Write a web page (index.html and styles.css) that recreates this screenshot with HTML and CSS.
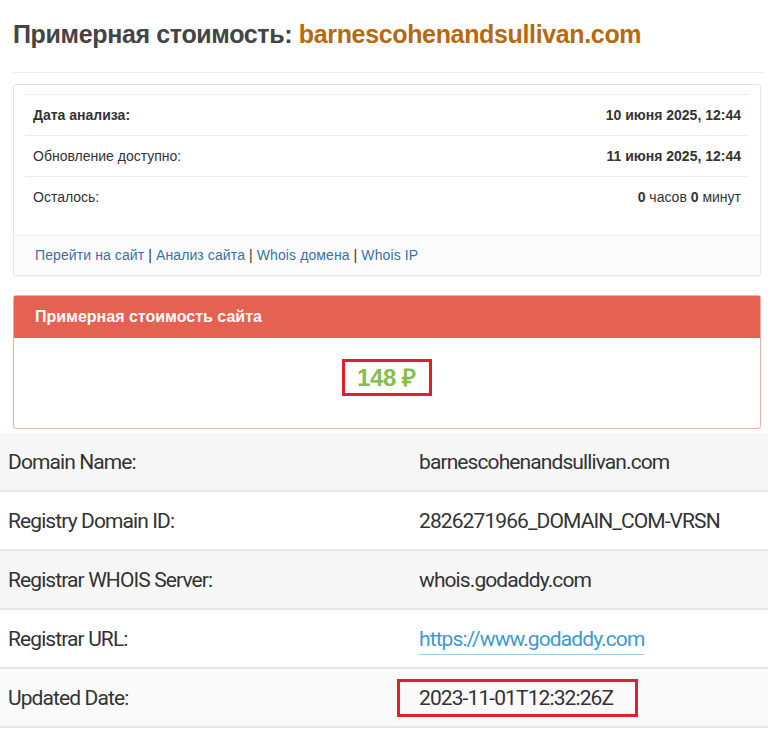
FILE: index.html
```html
<!DOCTYPE html>
<html>
<head>
    <title>Примерная стоимость: barnescohenandsullivan.com</title>
    <link rel="stylesheet" href="styles.css">
</head>
<body>
    <div class="page">
        <h1>Примерная стоимость: <span class="domain">barnescohenandsullivan.com</span></h1>
        <hr class="sep">

        <div class="info-card">
            <table class="info-table">
                <tr>
                    <td><strong>Дата анализа:</strong></td>
                    <td class="right"><strong>10 июня 2025, 12:44</strong></td>
                </tr>
                <tr>
                    <td>Обновление доступно:</td>
                    <td class="right"><strong>11 июня 2025, 12:44</strong></td>
                </tr>
                <tr>
                    <td>Осталось:</td>
                    <td class="right"><strong>0</strong> часов <strong>0</strong> минут</td>
                </tr>
            </table>
            <div class="card-footer">
                <a href="#">Перейти на сайт</a> | <a href="#">Анализ сайта</a> | <a href="#">Whois домена</a> | <a href="#">Whois IP</a>
            </div>
        </div>

        <div class="price-panel">
            <div class="price-heading">Примерная стоимость сайта</div>
            <div class="price-body">
                <span class="price mark">148 ₽</span>
            </div>
        </div>
    </div>

    <table class="whois">
        <tr>
            <td>Domain Name:</td>
            <td>barnescohenandsullivan.com</td>
        </tr>
        <tr>
            <td>Registry Domain ID:</td>
            <td>2826271966_DOMAIN_COM-VRSN</td>
        </tr>
        <tr>
            <td>Registrar WHOIS Server:</td>
            <td>whois.godaddy.com</td>
        </tr>
        <tr>
            <td>Registrar URL:</td>
            <td><a href="#">https://www.godaddy.com</a></td>
        </tr>
        <tr>
            <td>Updated Date:</td>
            <td><span class="mark date">2023-11-01T12:32:26Z</span></td>
        </tr>
    </table>
</body>
</html>
```

FILE: styles.css
```css
body {
    font-family: "Liberation Sans", Arial, sans-serif;
    color: #333;
    background-color: #fff;
    margin: 0;
    padding: 0;
}

.page {
    padding: 0 4px 0 13px;
}

h1 {
    font-size: 25px;
    letter-spacing: -0.35px;
    font-weight: bold;
    color: #444;
    margin: 0;
    padding: 21px 0 0 0;
    line-height: 27px;
}

h1 .domain {
    color: #b8690f;
}

.sep {
    border: 0;
    border-top: 1px solid #eee;
    margin: 24px 0 11px 0;
}

.info-card {
    border: 1px solid #e3e3e3;
    border-radius: 3px;
    box-shadow: 0 1px 1px rgba(0, 0, 0, 0.04);
    margin-right: 3px;
}

.info-table {
    width: calc(100% - 22px);
    margin: 9px 11px 18px 11px;
    border-collapse: collapse;
    font-size: 14px;
}

.info-table td {
    border-top: 1px solid #eee;
    padding: 11px 8px 11px 8px;
    line-height: 18px;
}

.info-table .right {
    text-align: right;
}

.card-footer {
    border-top: 1px solid #eee;
    background-color: #fcfcfc;
    padding: 10px 21px 11px 21px;
    font-size: 14px;
    letter-spacing: 0.1px;
    line-height: 18px;
    color: #333;
}

.card-footer a {
    color: #3f6ea8;
    text-decoration: none;
}

.price-panel {
    margin: 19px 3px 0 0;
    border: 1px solid #e3b3ab;
    border-radius: 3px;
}

.price-heading {
    background-color: #e56252;
    color: #fff;
    font-size: 16px;
    font-weight: bold;
    padding: 12px 21px 12px 21px;
    line-height: 18px;
}

.price-body {
    text-align: center;
    padding: 21px 0 32px 0;
}

.price {
    color: #86bd4d;
    font-size: 24px;
    letter-spacing: -0.3px;
    font-weight: bold;
    padding: 2px 13px 2px 12px;
    display: inline-block;
    line-height: 27px;
}

.mark {
    border: 3px solid #df1f2d;
}

.whois {
    width: 100%;
    border-collapse: collapse;
    font-family: Roboto, "Liberation Sans", sans-serif;
    font-size: 21px;
    letter-spacing: -0.9px;
    color: #333;
    margin-top: 4px;
}

.whois td {
    height: 57px;
    padding: 0 8px;
    border-bottom: 2px solid #e6e6e6;
}

.whois td:first-child {
    width: 395px;
}

.whois tr:nth-child(odd) {
    background-color: #f7f7f7;
}

.whois tr:last-child {
    background-color: #fafafa;
}

.whois a {
    color: #3c9ad1;
    text-decoration: none;
    border-bottom: 1px solid #9fcfe8;
    padding-bottom: 3px;
}

.whois .date {
    display: inline-block;
    margin-left: -22px;
    padding: 4px 22px 4px 19px;
}
```
